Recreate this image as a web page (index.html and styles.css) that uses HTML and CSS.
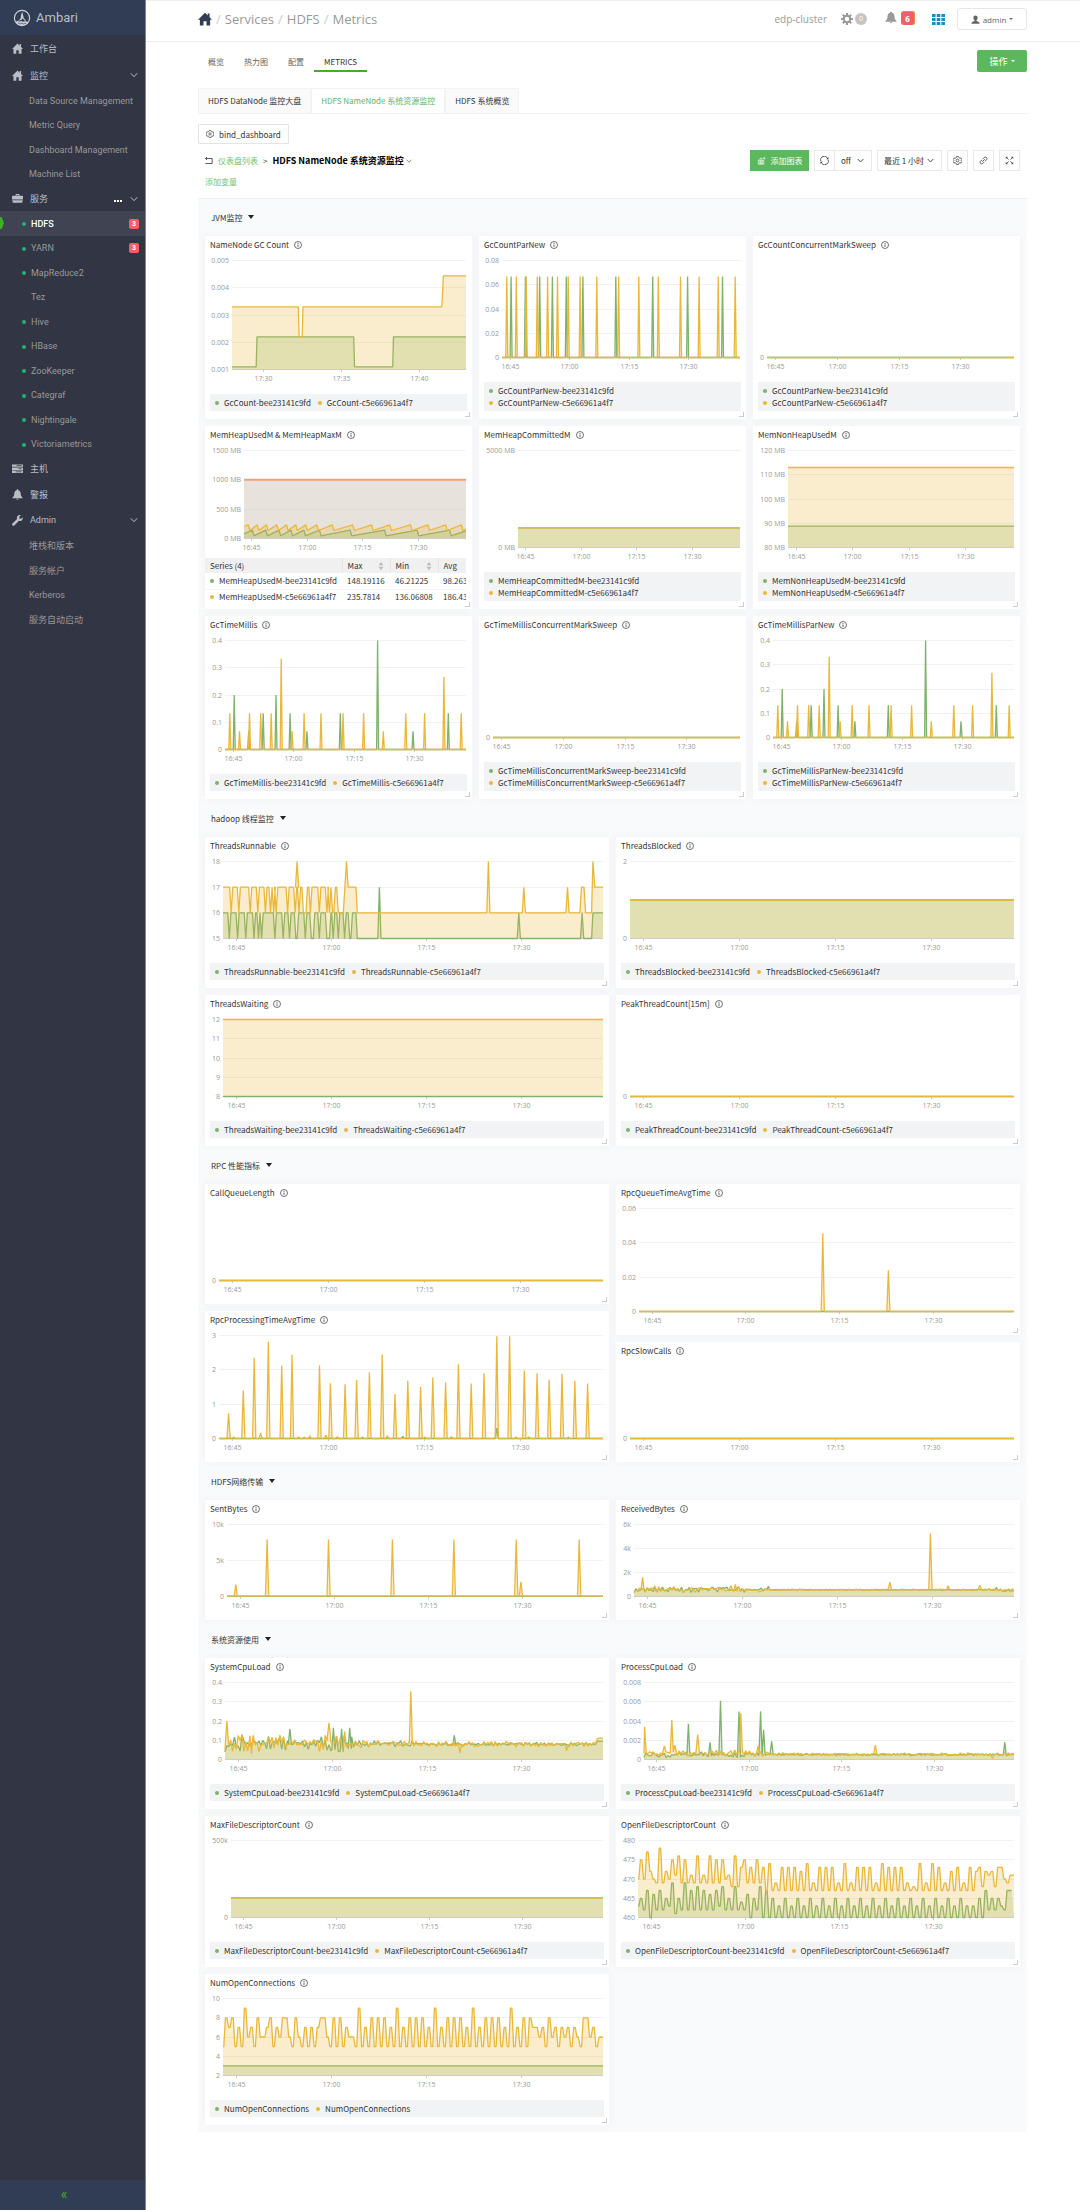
FILE: index.html
```html
<!DOCTYPE html>
<html lang="zh-CN">
<head>
    <meta charset="UTF-8">
    <meta name="viewport" content="width=device-width, initial-scale=1.0">
    <title>Ambari - HDFS Metrics</title>
    <link rel="stylesheet" href="styles.css">
</head>
<body>
    <svg class="sprite" aria-hidden="true">
        <symbol id="i-home" viewBox="0 0 12 12"><path d="M6 .6 0 6.6h1.6v5h3.1V8h2.6v3.6h3.1v-5H12L9.900 4.400V1.200H8.300v1.700z"/></symbol>
        <symbol id="i-case" viewBox="0 0 12 12"><path d="M4 3V1.200h4V3h3.400a.6.6 0 0 1 .6.6V7H0V3.600A.6.6 0 0 1 .6 3zm1 0h2v-.9H5zM0 7.800h12v.6h-.7v2.300H.7V8.400H0z"/></symbol>
        <symbol id="i-server" viewBox="0 0 12 12"><path d="M0 1.500h12v2.600H0zM0 4.900h12v2.600H0zM0 8.300h12v2.600H0z"/><path d="M5 2.800h5.500M7 6.200h3.500M4 9.600h6.500" stroke="#323544" stroke-width=".8"/></symbol>
        <symbol id="i-bell" viewBox="0 0 12 12"><path d="M6 .3c.6 0 1 .4 1 1 1.600.5 2.500 1.900 2.500 3.700 0 2.200.7 3.400 2 4.400v.8H.5v-.8c1.300-1 2-2.200 2-4.400 0-1.800.9-3.200 2.500-3.700 0-.6.4-1 1-1zM4.900 10.700h2.200c0 .7-.5 1.100-1.100 1.100s-1.100-.4-1.100-1.100z"/></symbol>
        <symbol id="i-wrench" viewBox="0 0 12 12"><path d="M11.700 2.400 9.900 4.200 8.200 3.800 7.800 2.100 9.600.3C8.200-.2 6.700.200 5.900 1.300c-.7.9-.8 2-.4 3L.5 9.300c-.6.6-.6 1.500 0 2.100s1.500.6 2.100 0l5-5c1 .4 2.200.2 3-.5 1-.9 1.500-2.200 1.100-3.500z"/></symbol>
        <symbol id="i-cog" viewBox="0 0 12 12"><circle cx="6" cy="6" r="3.200" fill="none" stroke="currentColor" stroke-width="2"/><path d="M6 0v2.500M6 9.500V12M0 6h2.500M9.500 6H12M1.800 1.800l1.700 1.700M8.500 8.500l1.700 1.700M1.800 10.200l1.700-1.700M8.500 3.500l1.700-1.700" stroke="currentColor" stroke-width="2"/></symbol>
        <symbol id="i-user" viewBox="0 0 12 12"><path d="M6 .5c1.700 0 2.800 1.200 2.800 3 0 1.500-.6 2.900-1.500 3.600v.9c1.200.7 4.200 1 4.200 3.500H.5C.5 9 3.500 8.700 4.700 8v-.9C3.800 6.400 3.200 5 3.200 3.500c0-1.800 1.100-3 2.800-3z"/></symbol>
        <symbol id="i-grid" viewBox="0 0 13 11"><path d="M0 0h3.600v3H0zM4.700 0h3.600v3H4.700zM9.400 0H13v3H9.400zM0 4h3.600v3H0zM4.700 4h3.600v3H4.700zM9.400 4H13v3H9.400zM0 8h3.600v3H0zM4.700 8h3.600v3H4.700zM9.400 8H13v3H9.400z"/></symbol>
        <symbol id="i-info" viewBox="0 0 8 8"><circle cx="4" cy="4" r="3.500" fill="none" stroke="currentColor" stroke-width=".7"/><path d="M4 3.500v2.400M4 2v.9" stroke="currentColor" stroke-width=".8"/></symbol>
        <symbol id="i-down" viewBox="0 0 8 8"><path d="M.8 2.300 4 5.700l3.200-3.400" fill="none" stroke="currentColor"/></symbol>
        <symbol id="i-setting" viewBox="0 0 10 10"><path d="M3.900.6h2.200l.4 1.300 1 .6 1.400-.3 1 1.800-.9 1 0 0 .9 1-1 1.800-1.400-.3-1 .6-.4 1.300H3.900l-.4-1.300-1-.6-1.400.3-1-1.800.9-1-.9-1 1-1.800 1.400.3 1-.6z" fill="none" stroke="currentColor" stroke-width=".8"/><circle cx="5" cy="5" r="1.500" fill="none" stroke="currentColor" stroke-width=".8"/></symbol>
        <symbol id="i-back" viewBox="0 0 8 8"><path d="M2 0 .5 1.500 2 3M.5 1.500h6.700v5H.5" fill="none" stroke="currentColor" stroke-width=".8"/></symbol>
        <symbol id="i-sync" viewBox="0 0 10 10"><path d="M1 5.800A4 4 0 0 1 8.500 3M9 4.200A4 4 0 0 1 1.500 7" fill="none" stroke="currentColor" stroke-width=".9"/><path d="M7 3.600h2.400V1.400zM3 6.400H.6v2.200z"/></symbol>
        <symbol id="i-link" viewBox="0 0 10 10"><path d="M4.200 3.300 6 1.500a1.800 1.800 0 0 1 2.500 2.500L6.700 5.800M5.800 6.700 4 8.500A1.800 1.800 0 0 1 1.500 6l1.800-1.800M3.600 6.400l2.800-2.800" fill="none" stroke="currentColor" stroke-width=".9"/></symbol>
        <symbol id="i-full" viewBox="0 0 10 10"><path d="M1.300 1.300 4 4M8.700 1.300 6 4M1.300 8.700 4 6M8.700 8.700 6 6M1.300 3V1.300H3M7 1.300h1.700V3M1.300 7v1.700H3M7 8.700h1.700V7" fill="none" stroke="currentColor" stroke-width=".8"/></symbol>
        <symbol id="i-addchart" viewBox="0 0 10 10"><path d="M1.500 9V4.500h2V9M3.500 9V2.500h2V9M5.500 9V5h2v4M1 9h7M8 1v3M6.500 2.500h3" fill="none" stroke="currentColor" stroke-width=".7"/></symbol>
    </svg>

    <div class="layout">
        <aside class="sidebar">
            <a class="brand" href="#">
                <svg class="brand-logo" viewBox="0 0 18 18">
                    <circle cx="9" cy="9" r="7.600" fill="none" stroke="#c9ced6" stroke-width="1.200"/>
                    <path d="M9.200 2.500 8 6.500 7.600 9.500 5 12l3.500-1.300L10 9.200l1.200 2 2 1-2.500-3.400z" fill="#c9ced6"/>
                    <path d="M2.500 13c2-1.500 3-1.200 4-.4 1.500-1 2.300-.8 3.200.2 1.400-.8 3-.7 5.800.2-1 2-3.500 3.600-6.500 3.600S3.500 15 2.500 13z" fill="#c9ced6"/>
                    <path d="M5 14.500c1-.6 2-.3 2.500.3 1-.8 2-.5 2.800.2.8-.7 1.700-.7 2.700-.4" fill="none" stroke="#323d55" stroke-width=".7"/>
                </svg>
                Ambari
            </a>
            <nav class="menu">
                <a class="menu-item first" href="#"><svg class="menu-icon"><use href="#i-home"/></svg>工作台</a>
                <a class="menu-item" href="#"><svg class="menu-icon"><use href="#i-home"/></svg>监控<svg class="menu-arrow"><use href="#i-down"/></svg></a>
                <ul class="submenu monitor">
                    <li><a href="#">Data Source Management</a></li>
                    <li><a href="#">Metric Query</a></li>
                    <li><a href="#">Dashboard Management</a></li>
                    <li><a href="#">Machine List</a></li>
                </ul>
                <a class="menu-item services-head" href="#"><svg class="menu-icon"><use href="#i-case"/></svg>服务<span class="more"><i></i><i></i><i></i></span><svg class="menu-arrow"><use href="#i-down"/></svg></a>
                <ul class="submenu services">
                    <li class="active"><a href="#"><i class="status"></i>HDFS<span class="badge">3</span></a></li>
                    <li><a href="#"><i class="status"></i>YARN<span class="badge">3</span></a></li>
                    <li><a href="#"><i class="status"></i>MapReduce2</a></li>
                    <li><a href="#"><i class="status none"></i>Tez</a></li>
                    <li><a href="#"><i class="status"></i>Hive</a></li>
                    <li><a href="#"><i class="status"></i>HBase</a></li>
                    <li><a href="#"><i class="status"></i>ZooKeeper</a></li>
                    <li><a href="#"><i class="status"></i>Categraf</a></li>
                    <li><a href="#"><i class="status"></i>Nightingale</a></li>
                    <li><a href="#"><i class="status"></i>Victoriametrics</a></li>
                </ul>
                <a class="menu-item hosts" href="#"><svg class="menu-icon"><use href="#i-server"/></svg>主机</a>
                <a class="menu-item" href="#"><svg class="menu-icon"><use href="#i-bell"/></svg>警报</a>
                <a class="menu-item" href="#"><svg class="menu-icon"><use href="#i-wrench"/></svg>Admin<svg class="menu-arrow"><use href="#i-down"/></svg></a>
                <ul class="submenu monitor">
                    <li><a href="#">堆栈和版本</a></li>
                    <li><a href="#">服务帐户</a></li>
                    <li><a href="#">Kerberos</a></li>
                    <li><a href="#">服务自动启动</a></li>
                </ul>
            </nav>
            <button class="collapse" type="button">«</button>
        </aside>

        <div class="page">
            <header class="topbar">
                <div class="crumbs">
                    <a class="crumb-home" href="#" aria-label="Home"><svg><use href="#i-home"/></svg></a>
                    <span class="sep">/</span><a href="#">Services</a>
                    <span class="sep">/</span><a href="#">HDFS</a>
                    <span class="sep">/</span><a href="#">Metrics</a>
                </div>
                <div class="topbar-right">
                    <span class="cluster">edp-cluster</span>
                    <span class="ops"><svg class="ops-icon"><use href="#i-cog"/></svg><span class="ops-count">0</span></span>
                    <span class="alerts"><svg class="alert-icon"><use href="#i-bell"/></svg><span class="alert-count">6</span></span>
                    <svg class="views-icon"><use href="#i-grid"/></svg>
                    <button class="user-btn" type="button"><svg><use href="#i-user"/></svg>admin<i class="caret"></i></button>
                </div>
            </header>

            <main class="content">
                <div class="service-bar">
                    <nav class="tabs">
                        <a href="#">概览</a>
                        <a href="#">热力图</a>
                        <a href="#">配置</a>
                        <a class="active" href="#">METRICS</a>
                    </nav>
                    <button class="action-btn" type="button">操作<i class="caret"></i></button>
                </div>

                <nav class="card-tabs">
                    <a href="#">HDFS DataNode 监控大盘</a>
                    <a class="active" href="#">HDFS NameNode 系统资源监控</a>
                    <a href="#">HDFS 系统概览</a>
                </nav>

                <button class="bind-btn" type="button"><svg><use href="#i-setting"/></svg>bind_dashboard</button>

                <div class="dash-head">
                    <div class="dash-title">
                        <svg><use href="#i-back"/></svg>
                        <a href="#">仪表盘列表</a>
                        <span class="gt">&gt;</span>
                        <h1>HDFS NameNode 系统资源监控</h1>
                        <svg class="title-down"><use href="#i-down"/></svg>
                    </div>
                    <div class="toolbar">
                        <button class="add-btn" type="button"><svg><use href="#i-addchart"/></svg>添加图表</button>
                        <div class="refresh">
                            <button class="tool-btn" type="button" aria-label="刷新"><svg><use href="#i-sync"/></svg></button>
                            <span class="select off"><select aria-label="自动刷新"><option>off</option></select><svg><use href="#i-down"/></svg></span>
                        </div>
                        <span class="select range"><select aria-label="时间范围"><option>最近 1 小时</option></select><svg><use href="#i-down"/></svg></span>
                        <button class="tool-btn" type="button" aria-label="设置"><svg><use href="#i-setting"/></svg></button>
                        <button class="tool-btn" type="button" aria-label="链接"><svg><use href="#i-link"/></svg></button>
                        <button class="tool-btn" type="button" aria-label="全屏"><svg><use href="#i-full"/></svg></button>
                    </div>
                </div>
                <a class="add-var" href="#">添加变量</a>

                <div class="dashboard">
                    <button class="row-title" type="button">JVM监控<i></i></button>
                    <div class="row three">
                        <section class="panel tall">
                            <h2>NameNode GC Count<svg><use href="#i-info"/></svg></h2>
                            <div class="chart" data-chart="gcCount"></div>
                            <div class="legend"><span>GcCount-bee23141c9fd</span><span>GcCount-c5e66961a4f7</span></div>
                        </section>
                        <section class="panel tall">
                            <h2>GcCountParNew<svg><use href="#i-info"/></svg></h2>
                            <div class="chart" data-chart="gcParNew"></div>
                            <div class="legend stacked"><span>GcCountParNew-bee23141c9fd</span><span>GcCountParNew-c5e66961a4f7</span></div>
                        </section>
                        <section class="panel tall">
                            <h2>GcCountConcurrentMarkSweep<svg><use href="#i-info"/></svg></h2>
                            <div class="chart" data-chart="zero"></div>
                            <div class="legend stacked"><span>GcCountParNew-bee23141c9fd</span><span>GcCountParNew-c5e66961a4f7</span></div>
                        </section>
                        <section class="panel tall">
                            <h2>MemHeapUsedM &amp; MemHeapMaxM<svg><use href="#i-info"/></svg></h2>
                            <div class="chart" data-chart="memHeap"></div>
                            <div class="series-box">
                                <table class="series">
                                    <thead>
                                        <tr><th class="name">Series (4)</th><th>Max<i class="sort"></i></th><th>Min<i class="sort"></i></th><th>Avg</th></tr>
                                    </thead>
                                    <tbody>
                                        <tr><td><i class="dot green"></i>MemHeapUsedM-bee23141c9fd</td><td>148.19116</td><td>46.21225</td><td>98.263</td></tr>
                                        <tr><td><i class="dot yellow"></i>MemHeapUsedM-c5e66961a4f7</td><td>235.7814</td><td>136.06808</td><td>186.43</td></tr>
                                    </tbody>
                                </table>
                            </div>
                        </section>
                        <section class="panel tall">
                            <h2>MemHeapCommittedM<svg><use href="#i-info"/></svg></h2>
                            <div class="chart" data-chart="memCommitted"></div>
                            <div class="legend stacked"><span>MemHeapCommittedM-bee23141c9fd</span><span>MemHeapCommittedM-c5e66961a4f7</span></div>
                        </section>
                        <section class="panel tall">
                            <h2>MemNonHeapUsedM<svg><use href="#i-info"/></svg></h2>
                            <div class="chart" data-chart="memNonHeap"></div>
                            <div class="legend stacked"><span>MemNonHeapUsedM-bee23141c9fd</span><span>MemNonHeapUsedM-c5e66961a4f7</span></div>
                        </section>
                        <section class="panel tall">
                            <h2>GcTimeMillis<svg><use href="#i-info"/></svg></h2>
                            <div class="chart" data-chart="gcTime"></div>
                            <div class="legend"><span>GcTimeMillis-bee23141c9fd</span><span>GcTimeMillis-c5e66961a4f7</span></div>
                        </section>
                        <section class="panel tall">
                            <h2>GcTimeMillisConcurrentMarkSweep<svg><use href="#i-info"/></svg></h2>
                            <div class="chart" data-chart="zero"></div>
                            <div class="legend stacked"><span>GcTimeMillisConcurrentMarkSweep-bee23141c9fd</span><span>GcTimeMillisConcurrentMarkSweep-c5e66961a4f7</span></div>
                        </section>
                        <section class="panel tall">
                            <h2>GcTimeMillisParNew<svg><use href="#i-info"/></svg></h2>
                            <div class="chart" data-chart="gcTime"></div>
                            <div class="legend stacked"><span>GcTimeMillisParNew-bee23141c9fd</span><span>GcTimeMillisParNew-c5e66961a4f7</span></div>
                        </section>
                    </div>

                    <button class="row-title" type="button">hadoop 线程监控<i></i></button>
                    <div class="row two">
                        <section class="panel medium">
                            <h2>ThreadsRunnable<svg><use href="#i-info"/></svg></h2>
                            <div class="chart" data-chart="threadsRunnable"></div>
                            <div class="legend"><span>ThreadsRunnable-bee23141c9fd</span><span>ThreadsRunnable-c5e66961a4f7</span></div>
                        </section>
                        <section class="panel medium">
                            <h2>ThreadsBlocked<svg><use href="#i-info"/></svg></h2>
                            <div class="chart" data-chart="threadsBlocked"></div>
                            <div class="legend"><span>ThreadsBlocked-bee23141c9fd</span><span>ThreadsBlocked-c5e66961a4f7</span></div>
                        </section>
                        <section class="panel medium">
                            <h2>ThreadsWaiting<svg><use href="#i-info"/></svg></h2>
                            <div class="chart" data-chart="threadsWaiting"></div>
                            <div class="legend"><span>ThreadsWaiting-bee23141c9fd</span><span>ThreadsWaiting-c5e66961a4f7</span></div>
                        </section>
                        <section class="panel medium">
                            <h2>PeakThreadCount[15m]<svg><use href="#i-info"/></svg></h2>
                            <div class="chart" data-chart="zero"></div>
                            <div class="legend"><span>PeakThreadCount-bee23141c9fd</span><span>PeakThreadCount-c5e66961a4f7</span></div>
                        </section>
                    </div>

                    <button class="row-title" type="button">RPC 性能指标<i></i></button>
                    <div class="row two">
                        <div class="column">
                            <section class="panel short">
                                <h2>CallQueueLength<svg><use href="#i-info"/></svg></h2>
                                <div class="chart" data-chart="zero"></div>
                            </section>
                            <section class="panel medium">
                                <h2>RpcProcessingTimeAvgTime<svg><use href="#i-info"/></svg></h2>
                                <div class="chart" data-chart="rpcProcessing"></div>
                            </section>
                        </div>
                        <div class="column">
                            <section class="panel medium">
                                <h2>RpcQueueTimeAvgTime<svg><use href="#i-info"/></svg></h2>
                                <div class="chart" data-chart="rpcQueue"></div>
                            </section>
                            <section class="panel short">
                                <h2>RpcSlowCalls<svg><use href="#i-info"/></svg></h2>
                                <div class="chart" data-chart="zero"></div>
                            </section>
                        </div>
                    </div>

                    <button class="row-title" type="button">HDFS网络传输<i></i></button>
                    <div class="row two">
                        <section class="panel short">
                            <h2>SentBytes<svg><use href="#i-info"/></svg></h2>
                            <div class="chart" data-chart="sentBytes"></div>
                        </section>
                        <section class="panel short">
                            <h2>ReceivedBytes<svg><use href="#i-info"/></svg></h2>
                            <div class="chart" data-chart="receivedBytes"></div>
                        </section>
                    </div>

                    <button class="row-title" type="button">系统资源使用<i></i></button>
                    <div class="row two">
                        <section class="panel medium">
                            <h2>SystemCpuLoad<svg><use href="#i-info"/></svg></h2>
                            <div class="chart" data-chart="systemCpu"></div>
                            <div class="legend"><span>SystemCpuLoad-bee23141c9fd</span><span>SystemCpuLoad-c5e66961a4f7</span></div>
                        </section>
                        <section class="panel medium">
                            <h2>ProcessCpuLoad<svg><use href="#i-info"/></svg></h2>
                            <div class="chart" data-chart="processCpu"></div>
                            <div class="legend"><span>ProcessCpuLoad-bee23141c9fd</span><span>ProcessCpuLoad-c5e66961a4f7</span></div>
                        </section>
                        <section class="panel medium">
                            <h2>MaxFileDescriptorCount<svg><use href="#i-info"/></svg></h2>
                            <div class="chart" data-chart="maxFile"></div>
                            <div class="legend"><span>MaxFileDescriptorCount-bee23141c9fd</span><span>MaxFileDescriptorCount-c5e66961a4f7</span></div>
                        </section>
                        <section class="panel medium">
                            <h2>OpenFileDescriptorCount<svg><use href="#i-info"/></svg></h2>
                            <div class="chart" data-chart="openFile"></div>
                            <div class="legend"><span>OpenFileDescriptorCount-bee23141c9fd</span><span>OpenFileDescriptorCount-c5e66961a4f7</span></div>
                        </section>
                        <section class="panel medium">
                            <h2>NumOpenConnections<svg><use href="#i-info"/></svg></h2>
                            <div class="chart" data-chart="openConnections"></div>
                            <div class="legend"><span>NumOpenConnections</span><span>NumOpenConnections</span></div>
                        </section>
                    </div>
                </div>
            </main>
        </div>
    </div>

    <script src="charts.js"></script>
</body>
</html>
```
FILE: styles.css
```css
* {
    box-sizing: border-box;
}

body {
    margin: 0;
    font-family: "Noto Sans CJK SC", "Open Sans", sans-serif;
    font-size: 8px;
    color: #333;
    background: #fff;
}

a {
    color: inherit;
    text-decoration: none;
}

button,
select {
    font: inherit;
    color: inherit;
    cursor: pointer;
}

svg {
    fill: currentColor;
    flex: none;
}

.sprite {
    display: none;
}

.layout {
    display: flex;
    min-height: 100vh;
}

/* Sidebar */
.sidebar {
    width: 146px;
    flex: none;
    display: flex;
    flex-direction: column;
    background: #323544;
    border-right: 1px solid #82858e;
    color: #b8bec4;
    font-family: Roboto, "Noto Sans CJK SC", sans-serif;
    font-size: 9px;
}

.brand {
    display: flex;
    align-items: center;
    gap: 5px;
    height: 35px;
    padding-left: 13px;
    background: #313d55;
    color: #b8bec4;
    font-size: 13px;
}

.brand-logo {
    width: 18px;
    height: 18px;
}

.menu {
    flex: 1;
}

.menu-item {
    display: flex;
    align-items: center;
    height: 26px;
    padding: 0 7px 0 12px;
}

.menu-item.first {
    height: 27px;
}

.menu-item.services-head,
.menu-item.hosts {
    height: 25px;
}

.menu-icon {
    width: 11px;
    height: 11px;
    margin-right: 7px;
}

.menu-arrow {
    width: 8px;
    height: 8px;
    margin-left: auto;
}

.more {
    display: flex;
    gap: 1px;
    margin-left: auto;
    padding-top: 5px;
}

.more i {
    width: 2px;
    height: 2px;
    background: #fff;
}

.more + .menu-arrow {
    margin-left: 8px;
}

.submenu {
    display: grid;
    grid-auto-rows: 1fr;
    margin: 0;
    padding: 0;
    list-style: none;
    color: #999;
}

.submenu.monitor {
    height: 98px;
}

.submenu.services {
    height: 245px;
}

.submenu a {
    display: flex;
    align-items: center;
    height: 100%;
    padding: 1px 6px 0 29px;
}

.submenu.services a {
    padding-left: 22px;
}

.submenu .active {
    position: relative;
    background: #404351;
    color: #fff;
    font-weight: 500;
}

.submenu .active::before {
    content: "";
    position: absolute;
    left: 0;
    top: 6px;
    width: 4px;
    height: 12px;
    background: #3fae2a;
    clip-path: polygon(0 0, 40% 0, 100% 50%, 40% 100%, 0 100%);
}

.status {
    width: 4px;
    height: 4px;
    margin: 1px 5px 0 0;
    border-radius: 50%;
    background: #1eb475;
}

.status.none {
    visibility: hidden;
}

.badge {
    width: 10px;
    margin-left: auto;
    border-radius: 2px;
    background: #ef6162;
    color: #fff;
    font-size: 7px;
    font-weight: bold;
    line-height: 10px;
    text-align: center;
}

.collapse {
    height: 30px;
    border: 0;
    background: #313d55;
    color: #3fae2a;
    font-size: 14px;
    padding: 0 17px 3px 0;
}

/* Top bar */
.page {
    flex: 1;
    min-width: 0;
}

.topbar {
    display: flex;
    align-items: center;
    justify-content: space-between;
    height: 42px;
    padding: 0 53px 4px 52px;
    border-top: 1px solid #eee;
    border-bottom: 1px solid #ebebeb;
    color: #999;
    font-family: "Open Sans", "Noto Sans CJK SC", sans-serif;
}

.crumbs {
    display: flex;
    align-items: center;
    gap: 4px;
    font-size: 13px;
}

.crumb-home {
    display: flex;
    color: #313d55;
}

.crumb-home svg {
    width: 14px;
    height: 14px;
}

.crumbs .sep {
    color: #ccc;
}

.topbar-right {
    display: flex;
    align-items: center;
}

.cluster {
    margin-right: 14px;
    font-size: 10px;
}

.ops,
.alerts {
    display: flex;
    align-items: center;
    gap: 2px;
}

.ops {
    margin-right: 18px;
}

.ops-icon {
    width: 12px;
    height: 12px;
}

.ops-count {
    width: 12px;
    border-radius: 50%;
    background: #c4c4c4;
    color: #fff;
    font-size: 7px;
    line-height: 12px;
    text-align: center;
}

.alerts {
    gap: 4px;
    margin-right: 17px;
    padding-bottom: 3px;
}

.alert-icon {
    width: 12px;
    height: 13px;
}

.alert-count {
    width: 14px;
    border-radius: 3px;
    background: #ef6162;
    border-top: 1px solid #e98a40;
    border-right: 1px solid #e98a40;
    color: #fff;
    font-size: 8px;
    font-weight: bold;
    line-height: 13px;
    text-align: center;
}

.views-icon {
    width: 13px;
    height: 11px;
    margin-right: 12px;
    color: #1491c1;
}

.user-btn {
    display: flex;
    align-items: center;
    justify-content: center;
    gap: 3px;
    width: 70px;
    height: 22px;
    padding: 0;
    border: 1px solid #e6e6e6;
    border-radius: 3px;
    background: #fff;
    color: #666;
    font-size: 8px;
}

.user-btn svg {
    width: 9px;
    height: 9px;
}

.caret {
    border: 2px solid transparent;
    border-top-color: currentColor;
    border-bottom: 0;
}

/* Service tabs */
.content {
    padding: 8px 53px 0 52px;
}

.service-bar {
    display: flex;
    justify-content: space-between;
    align-items: flex-end;
    margin-bottom: 16px;
}

.tabs {
    display: flex;
    color: #666;
}

.tabs a {
    padding: 0 10px;
    border-bottom: 2px solid transparent;
    line-height: 16px;
}

.tabs .active {
    border-color: #3fae2a;
    color: #333;
}

.action-btn {
    display: flex;
    align-items: center;
    justify-content: center;
    gap: 3px;
    width: 50px;
    height: 22px;
    border: 0;
    border-radius: 2px;
    background: #5cb85c;
    color: #fff;
    font-size: 9px;
}

.card-tabs {
    display: flex;
    border-bottom: 1px solid #f0f0f0;
}

.card-tabs a {
    padding: 0 9px;
    border: 1px solid #f3f3f3;
    border-bottom: 0;
    background: #fafafa;
    line-height: 24px;
}

.card-tabs .active {
    background: #fff;
    color: #5cb85c;
}

.bind-btn {
    display: flex;
    align-items: center;
    gap: 5px;
    height: 20px;
    margin: 10px 0 6px;
    padding: 0 7px;
    border: 1px solid #e4e4e4;
    border-radius: 1px;
    background: #fff;
}

.bind-btn svg {
    width: 8px;
    height: 8px;
}

.dash-head {
    display: flex;
    align-items: center;
    justify-content: space-between;
    padding: 0 7px;
}

.dash-title {
    display: flex;
    align-items: center;
    gap: 5px;
}

.dash-title svg {
    width: 8px;
    height: 8px;
}

.dash-title a,
.add-var {
    color: #73c173;
}

.dash-title h1 {
    margin: 0;
    color: #000;
    font-size: 9px;
    line-height: 14px;
}

.dash-title .title-down {
    width: 6px;
    margin-left: -3px;
    color: #666;
}

.toolbar {
    display: flex;
    gap: 5px;
}

.toolbar svg {
    width: 9px;
    height: 9px;
}

.add-btn {
    display: flex;
    align-items: center;
    justify-content: center;
    gap: 5px;
    width: 59px;
    height: 21px;
    padding: 0;
    border: 0;
    background: #5cb85c;
    color: #fff;
}

.refresh {
    display: flex;
}

.tool-btn {
    display: flex;
    align-items: center;
    justify-content: center;
    width: 21px;
    height: 21px;
    padding: 0;
    border: 1px solid #e9e9e9;
    background: #fff;
}

.select {
    position: relative;
    height: 21px;
}

.select select {
    width: 100%;
    height: 100%;
    padding: 0 6px;
    border: 1px solid #e9e9e9;
    border-radius: 0;
    background: #fff;
    appearance: none;
}

.select svg {
    position: absolute;
    right: 8px;
    top: 7px;
    width: 7px;
    height: 7px;
    pointer-events: none;
}

.select.off {
    width: 38px;
    margin-left: -1px;
}

.select.range {
    width: 65px;
}

.add-var {
    display: block;
    padding: 3px 7px 8px;
    line-height: 16px;
}

/* Dashboard */
.dashboard {
    display: flex;
    flex-direction: column;
    gap: 7px;
    padding: 6px 7px 7px;
    border-top: 1px solid #eceef1;
    background: #f9fafc;
}

.row-title {
    display: flex;
    align-items: center;
    align-self: flex-start;
    gap: 6px;
    height: 24px;
    padding: 0 6px;
    border: 0;
    background: none;
}

.row-title i {
    border: 3px solid transparent;
    border-top: 4px solid #222;
    border-bottom: 0;
}

.row {
    display: grid;
    gap: 7px;
}

.row.three {
    grid-template-columns: repeat(3, minmax(0, 1fr));
}

.row.two {
    grid-template-columns: repeat(2, minmax(0, 1fr));
}

.column {
    display: flex;
    flex-direction: column;
    gap: 7px;
}

.panel {
    position: relative;
    display: flex;
    flex-direction: column;
    padding: 0 5px 8px;
    background: #fff;
    box-shadow: 0 0 8px rgba(30, 50, 80, 0.05);
}

.panel.tall {
    height: 183px;
}

.panel.medium {
    height: 151px;
}

.panel.short {
    height: 120px;
}

/* resize handle */
.panel::after {
    content: "";
    position: absolute;
    right: 2px;
    bottom: 2px;
    width: 4px;
    height: 4px;
    border-right: 1px solid #ccc;
    border-bottom: 1px solid #ccc;
}

.panel h2 {
    display: flex;
    align-items: center;
    gap: 5px;
    margin: 0;
    font-size: 8px;
    font-weight: normal;
    line-height: 18px;
}

.panel h2 svg {
    width: 8px;
    height: 8px;
}

.chart {
    flex: 1;
    min-height: 0;
    overflow: hidden;
}

.chart svg {
    display: block;
}

.chart text {
    fill: #999;
    font-family: "Open Sans", sans-serif;
    font-size: 7px;
}

.legend {
    display: flex;
    gap: 7px;
    margin-top: 9px;
    padding: 3px 5px 2px;
    background: #f2f3f5;
    line-height: 12px;
}

.legend.stacked {
    flex-direction: column;
    gap: 0;
}

.legend span {
    display: flex;
    align-items: center;
    gap: 5px;
}

.legend span::before {
    content: "";
    width: 4px;
    height: 4px;
    border-radius: 50%;
    background: #7eb26d;
}

.legend span:nth-child(2)::before {
    background: #eab839;
}

.series-box {
    height: 43px;
    margin: 4px 1px 0 -5px;
    overflow: hidden;
}

.series {
    width: 281px;
    border-collapse: collapse;
    table-layout: fixed;
}

.series th,
.series td {
    width: 48px;
    height: 16px;
    padding: 0 5px;
    font-weight: normal;
    line-height: 14px;
    text-align: left;
    white-space: nowrap;
}

.series th {
    position: relative;
    height: 15px;
    border-right: 1px solid #e6e6e6;
    background: #f0f0f0;
}

.series .name {
    width: 137px;
}

.series td {
    border-bottom: 1px solid #f5f5f5;
}

.dot {
    display: inline-block;
    width: 4px;
    height: 4px;
    margin-right: 5px;
    border-radius: 50%;
    vertical-align: 1px;
}

.dot.green {
    background: #7eb26d;
}

.dot.yellow {
    background: #eab839;
}

.sort {
    position: absolute;
    right: 6px;
    top: 4px;
    width: 5px;
    height: 8px;
    background: #bbb;
    clip-path: polygon(50% 0, 100% 40%, 0 40%, 0 60%, 100% 60%, 50% 100%, 0 60%, 0 40%);
}
```
FILE: charts.js
```js
const GREEN = '#7eb26d';
const YELLOW = '#eab839';
const HOUR = { span: 60, ticks: [[2, '16:45'], [17, '17:00'], [32, '17:15'], [47, '17:30']] };
const QUARTER = { span: 15, ticks: [[2, '17:30'], [7, '17:35'], [12, '17:40']] };

// small seeded generator, so every load draws the same noise
function random(seed) {
    return () => {
        seed = (seed * 16807) % 2147483647;
        return seed / 2147483647;
    };
}

function flat(v) {
    return [[0, v], [60, v]];
}

// base line with peaks or dips: [minute, value, half width of the flat part]
function spikes(base, events, from = 0, to = 60) {
    const points = [[from, base]];
    events.forEach(([t, v, w = 0]) => {
        points.push([t - w - 0.25, base], [t - w, v], [t + w, v], [t + w + 0.25, base]);
    });
    points.push([to, base]);
    return points;
}

// phases: [end minute, low, high]
function noise(seed, phases, peaks) {
    const rnd = random(seed);
    let points = [];
    let t = 0;
    phases.forEach(([end, low, high]) => {
        for (; t <= end; t += 0.3) {
            const up = points.length % 2 ? 0.5 : 0;
            points.push([t, low + (high - low) * (up * 0.6 + rnd() * 0.7)]);
        }
    });
    points.push([60, points[points.length - 1][1]]);
    peaks.forEach(([at, v]) => {
        const near = points.find(p => p[0] >= at)[1];
        points = points.filter(p => Math.abs(p[0] - at) > 0.28);
        points.push([Math.max(0, at - 0.25), near], [at, v], [at + 0.25, near]);
    });
    return points.sort((a, b) => a[0] - b[0]);
}

function saw(drops, low, high, start, end) {
    const points = [[0, start]];
    drops.forEach(t => points.push([t, high], [t + 0.4, low]));
    points.push([60, end]);
    return points;
}

// one value per half minute, each held for a moment
function waves(head, peaks, low, tail) {
    let values = head.slice();
    peaks.forEach(p => values.push(p, low));
    values = values.slice(0, 121 - tail.length).concat(tail);
    const points = [];
    values.forEach((v, i) => {
        points.push([Math.max(0, i / 2 - 0.12), v], [Math.min(60, i / 2 + 0.12), v]);
    });
    return points;
}

const gcYellow = [1.2, 3.6, 6.1, 8.9, 11.5, 14, 16.7, 19.7, 23.9, 29.4, 34.5, 39.4, 45, 49.7, 54.5, 58.8];
const gcGreen = [2.3, 5.9, 9.5, 12.7, 16.2, 20.4, 28.7, 38, 46.8, 55.6];
const timeYellow = [0.133, 0.067, 0.133, 0.133, 0.133, 0.333, 0.067, 0.133, 0.133, 0.133, 0.133, 0.067, 0.133, 0.133, 0.267, 0.133];
const timeGreen = [0.2, 0.067, 0.133, 0.2, 0.133, 0.067, 0.133, 0.4, 0.067, 0.133];

const charts = {
    zero: { left: 9, max: 1, min: 0, labels: [[0, '0']], series: [flat(0), flat(0)] },
    gcCount: {
        left: 22, min: 0.001, max: 0.005, axis: QUARTER,
        labels: [[0.001, '0.001'], [0.002, '0.002'], [0.003, '0.003'], [0.004, '0.004'], [0.005, '0.005']],
        series: [
            [[0, 0.0011], [1.55, 0.0011], [1.6, 0.0022], [7.8, 0.0022], [7.85, 0.0011], [10.3, 0.0011], [10.35, 0.0022], [15, 0.0022]],
            [[0, 0.0033], [4.25, 0.0033], [4.3, 0.0022], [4.5, 0.0022], [4.55, 0.0033], [13.45, 0.0033], [13.55, 0.00444], [15, 0.00444]]
        ]
    },
    gcParNew: {
        left: 18, min: 0, max: 0.08,
        labels: [[0, '0'], [0.02, '0.02'], [0.04, '0.04'], [0.06, '0.06'], [0.08, '0.08']],
        series: [spikes(0, gcGreen.map(t => [t, 0.0667])), spikes(0, gcYellow.map(t => [t, 0.0667]))]
    },
    memHeap: {
        left: 34, min: 0, max: 1500,
        labels: [[0, '0 MB'], [500, '500 MB'], [1000, '1000 MB'], [1500, '1500 MB']],
        limit: 1003,
        series: [saw(gcGreen, 46, 144, 80, 130), saw(gcYellow, 136, 232, 205, 160)]
    },
    memCommitted: {
        left: 34, min: 0, max: 5000, labels: [[0, '0 MB'], [5000, '5000 MB']],
        series: [flat(1010), flat(1010)]
    },
    memNonHeap: {
        left: 30, min: 80, max: 120,
        labels: [[80, '80 MB'], [90, '90 MB'], [100, '100 MB'], [110, '110 MB'], [120, '120 MB']],
        series: [flat(88.8), flat(113)]
    },
    gcTime: {
        left: 15, min: 0, max: 0.4,
        labels: [[0, '0'], [0.1, '0.1'], [0.2, '0.2'], [0.3, '0.3'], [0.4, '0.4']],
        series: [spikes(0, gcGreen.map((t, i) => [t, timeGreen[i]])), spikes(0, gcYellow.map((t, i) => [t, timeYellow[i]]))]
    },
    threadsRunnable: {
        left: 13, min: 15, max: 18, labels: [[15, '15'], [16, '16'], [17, '17'], [18, '18']],
        series: [
            [
                ...spikes(16, [[1, 15], [2.3, 15], [3.6, 15], [4.9, 15], [5.6, 15], [6.1, 15], [8.2, 15], [9.5, 15], [10.5, 15], [11.6, 15, 0.1], [13, 15], [14.1, 15, 0.15], [15.2, 15], [16.6, 15, 0.2], [17.4, 15], [18.2, 15], [19.2, 15], [20.1, 15, 0.1]], 0, 21),
                ...spikes(15, [[24.7, 17], [46.7, 16], [56.7, 16]], 21.2, 58.2),
                [58.4, 16], [60, 16]
            ],
            [
                ...spikes(17, [[1.3, 16], [2.5, 16], [4.3, 16], [5.5, 16], [6.7, 16], [7.5, 16], [8, 16], [8.4, 16], [10.2, 16], [11.4, 16], [11.7, 18], [12, 16], [12.9, 16, 0.2], [13.8, 16], [15.2, 16], [16.4, 16], [16.8, 16], [17.4, 16, 0.1], [18.6, 16, 0.4], [19.5, 18]], 0, 21),
                ...spikes(16, [[41.9, 18], [47.5, 17], [54.4, 17], [56.8, 17, 0.2]], 21.2, 58.2),
                [58.4, 18], [58.7, 17], [60, 17]
            ]
        ]
    },
    threadsBlocked: { left: 9, min: 0, max: 2, labels: [[0, '0'], [2, '2']], series: [flat(1), flat(1)] },
    threadsWaiting: {
        left: 13, min: 8, max: 12,
        labels: [[8, '8'], [9, '9'], [10, '10'], [11, '11'], [12, '12']],
        series: [flat(8), flat(12)]
    },
    rpcProcessing: {
        left: 9, min: 0, max: 3, labels: [[0, '0'], [1, '1'], [2, '2'], [3, '3']],
        series: [
            spikes(0, [[28.7, 0.06], [43.4, 0.3]]),
            spikes(0, [
                [1.5, 0.73], [2.3, 0.04], [3.8, 1.4], [5.5, 2.35], [6.5, 0.15], [7.7, 2.82], [9.8, 2.13], [11.4, 2.44], [12.4, 0.04],
                [13.3, 0.04], [14.2, 0.08], [15.7, 2.13], [16.7, 0.1], [17.4, 1.61], [18.5, 0.05], [19.7, 1.58], [21.5, 1.7],
                [22.4, 0.04], [23.5, 1.93], [25.5, 2.45], [26.3, 0.08], [27.5, 1.3], [29.5, 1.68], [31.5, 1.5], [32.2, 0.04],
                [33.4, 1.78], [35.4, 1.63], [36.3, 0.05], [37.4, 2.16], [39.4, 1.6], [41.4, 1.9], [43.4, 2.98], [45.4, 2.98],
                [46.4, 0.04], [47.7, 1.98], [48.4, 0.05], [49.7, 1.9], [51.6, 1.72], [53.6, 1.88], [54.6, 0.04], [55.6, 1.68], [57.6, 1.6]
            ])
        ]
    },
    rpcQueue: {
        left: 18, min: 0, max: 0.06, labels: [[0, '0'], [0.02, '0.02'], [0.04, '0.04'], [0.06, '0.06']],
        series: [flat(0), spikes(0, [[29.4, 0.0455], [39.9, 0.024]])]
    },
    sentBytes: {
        left: 17, min: 0, max: 10000, labels: [[0, '0'], [5000, '5k'], [10000, '10k']],
        series: [
            flat(60),
            spikes(60, [[1.4, 1650], [6.4, 7900], [16.2, 7900], [26.4, 7900], [36.2, 7900], [46.15, 7900], [46.9, 2050], [56.2, 7900]])
        ]
    },
    receivedBytes: {
        left: 13, min: 0, max: 6000, labels: [[0, '0'], [2000, '2k'], [4000, '4k'], [6000, '6k']],
        series: [
            noise(11, [[17, 330, 850], [21, 350, 700], [56, 520, 600], [60, 380, 620]], [[21.2, 850], [57.2, 750]]),
            noise(23, [[17, 330, 900], [21, 350, 700], [56, 500, 620], [60, 350, 650]], [[1.35, 1600], [16, 1000], [40.4, 1200], [46.8, 5250], [49.6, 900], [54.6, 950]])
        ]
    },
    systemCpu: {
        left: 15, min: 0, max: 0.4, labels: [[0, '0'], [0.1, '0.1'], [0.2, '0.2'], [0.3, '0.3'], [0.4, '0.4']],
        series: [
            noise(31, [[21, 0.04, 0.13], [30, 0.06, 0.1], [59, 0.07, 0.09], [60, 0.095, 0.096]], [[10.3, 0.16], [17.2, 0.165], [18.5, 0.16], [19.8, 0.165], [36.4, 0.125]]),
            noise(47, [[21, 0.04, 0.13], [30, 0.06, 0.1], [59, 0.065, 0.095], [59.2, 0.1, 0.11], [60, 0.11, 0.111]], [[0.3, 0.2], [4.2, 0.03], [16.5, 0.19], [19, 0.145], [29.5, 0.355], [37.3, 0.035], [54.2, 0.045]])
        ]
    },
    processCpu: {
        left: 23, min: 0, max: 0.008,
        labels: [[0, '0'], [0.002, '0.002'], [0.004, '0.004'], [0.006, '0.006'], [0.008, '0.008']],
        series: [
            noise(59, [[21, 0.0002, 0.0008], [60, 0.0004, 0.0006]], [[7.2, 0.0037], [10.7, 0.0018], [12.4, 0.0061], [15.4, 0.005], [18.9, 0.005], [19.4, 0.0031], [20.7, 0.0019], [58.5, 0.0018]]),
            noise(71, [[21, 0.0003, 0.001], [60, 0.0004, 0.0007]], [[0.1, 0.0034], [3.3, 0.0014], [4.5, 0.0041], [5, 0.0015], [8.7, 0.0026], [15.7, 0.0048], [18.5, 0.0014], [37.5, 0.0015], [56.5, 0.0001]])
        ]
    },
    maxFile: { left: 21, min: 0, max: 500, labels: [[0, '0'], [500, '500k']], series: [flat(128), flat(128)] },
    openFile: {
        left: 17, min: 460, max: 480,
        labels: [[460, '460'], [465, '465'], [470, '470'], [475, '475'], [480, '480']],
        series: [
            waves(
                [463, 465, 462, 467, 460, 466, 462, 467, 462, 465, 463, 469, 461, 465, 462, 469, 462, 467, 462, 468, 462, 467, 462, 466, 462, 467, 463, 468, 462, 465, 462, 468, 462, 464, 462, 466, 460, 465, 462, 468, 460, 467, 460],
                [465, 463, 465, 463, 465, 463, 465, 463, 465, 463, 465, 463, 465, 463, 465, 463, 465, 463, 465, 463, 465, 463, 465, 463, 465, 463, 465, 463, 465, 463, 465, 463, 463, 465],
                460, [467, 462, 465, 462, 465, 463, 462, 467, 467]),
            waves(
                [470, 475, 470, 477, 472, 470, 469, 478, 469, 472, 470, 475, 471, 476, 469, 475, 469, 471, 469, 476, 469, 471, 469, 476, 469, 475, 469, 475, 470, 471, 468, 476, 468, 473, 475, 469, 473, 469, 475, 469, 473, 467],
                [474, 469, 473, 473, 473, 472, 474, 469, 473, 473, 473, 469, 474, 469, 473, 473, 473, 469, 474, 473, 473, 473, 469, 468, 474, 469, 474, 473, 469, 472, 473, 469, 473, 473],
                467, [472, 473, 468, 472, 471, 472, 468, 473, 473, 470, 469, 471, 471])
        ]
    },
    openConnections: {
        left: 13, min: 2, max: 10, labels: [[2, '2'], [4, '4'], [6, '6'], [8, '8'], [10, '10']],
        series: [
            flat(3),
            waves(
                [5, 8, 7, 8, 5, 7, 5, 9, 6, 7, 5, 8, 6, 6, 7, 8, 5, 7, 6, 8, 8, 6, 5, 8, 6, 5, 7, 5, 7, 5, 7, 8, 8, 6, 5, 8, 5, 8, 5, 7, 6, 6, 5],
                [9, 7, 8, 8, 8, 7, 9, 7, 8, 8, 8, 7, 9, 7, 8, 8, 8, 7, 9, 7, 8, 8, 8, 7, 9, 7, 8, 8],
                5, [7, 7, 6, 7, 5, 8, 6, 7, 5, 7, 6, 7, 5, 7, 6, 5, 8, 8, 6, 7, 5, 6, 6])
        ]
    }
};

function draw(el) {
    const chart = charts[el.dataset.chart];
    const axis = chart.axis || HOUR;
    const width = el.clientWidth;
    const height = el.clientHeight;
    const left = chart.left;
    const right = width - 1;
    const top = 6;
    const bottom = height - 16;
    const x = t => left + (t / axis.span) * (right - left);
    const y = v => bottom + 0.5 - ((v - chart.min) / (chart.max - chart.min)) * (bottom - top);
    const out = [];

    chart.labels.forEach(([v, text]) => {
        const line = Math.floor(y(v)) + 0.5;
        const stroke = v === chart.min ? '#ccc' : '#f1f1f1';
        out.push(`<line x1="${left}" x2="${right}" y1="${line}" y2="${line}" stroke="${stroke}"/>`);
        out.push(`<text x="${left - 3}" y="${line + 2}" text-anchor="end">${text}</text>`);
    });

    axis.ticks.forEach(([t, text]) => {
        const tick = Math.round(x(t)) + 0.5;
        out.push(`<line x1="${tick}" x2="${tick}" y1="${bottom}" y2="${bottom + 3}" stroke="#ccc"/>`);
        out.push(`<text x="${tick}" y="${bottom + 12}" text-anchor="middle">${text}</text>`);
    });

    if (chart.limit) {
        const level = y(chart.limit);
        out.push(`<rect x="${left}" y="${level}" width="${right - left}" height="${bottom - level}" fill="#d8cfc4" fill-opacity="0.6"/>`);
        out.push(`<line x1="${left}" x2="${right}" y1="${level}" y2="${level}" stroke="#f2a074" stroke-width="2"/>`);
    }

    chart.series.forEach((points, i) => {
        const color = i ? YELLOW : GREEN;
        const path = points.map(([t, v]) => `${x(t).toFixed(1)},${y(v).toFixed(1)}`).join(' ');
        out.push(`<polygon points="${left},${bottom} ${path} ${right},${bottom}" fill="${color}" fill-opacity="0.25"/>`);
        out.push(`<polyline points="${path}" fill="none" stroke="${color}" stroke-width="1.3" stroke-linejoin="bevel"/>`);
    });

    el.innerHTML = `<svg width="${width}" height="${height}" viewBox="0 0 ${width} ${height}">${out.join('')}</svg>`;
}

function drawAll() {
    document.querySelectorAll('.chart').forEach(el => {
        el.innerHTML = '';
        draw(el);
    });
}

drawAll();
window.addEventListener('resize', drawAll);
```
